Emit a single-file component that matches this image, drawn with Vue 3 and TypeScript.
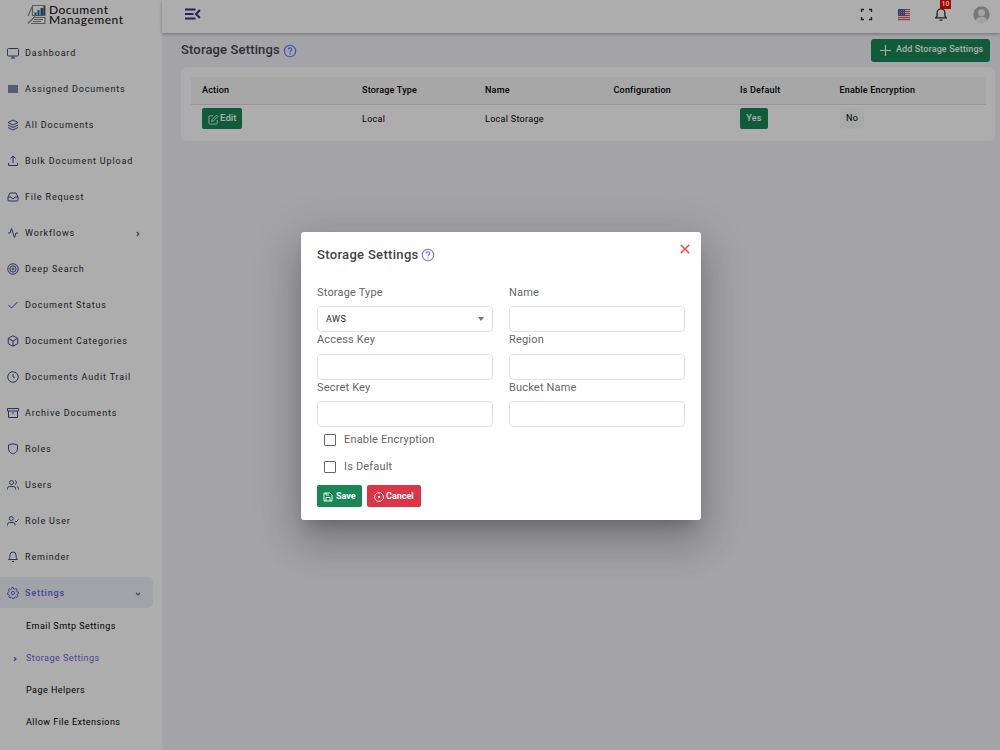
<script setup lang="ts">
interface NavItem { label: string; icon: string; arrow?: string; active?: boolean }

const nav: NavItem[] = [
  { label: 'Dashboard', icon: '<rect x="1" y="3" width="22" height="15" rx="2"/><path d="M8 22h8M12 18v4"/>' },
  { label: 'Assigned Documents', icon: '<rect class="solid" x="2" y="4" width="20" height="16"/>' },
  { label: 'All Documents', icon: '<path d="M12 2 2 7l10 5 10-5zM2 17l10 5 10-5M2 12l10 5 10-5"/>' },
  { label: 'Bulk Document Upload', icon: '<path d="M21 16v5H3v-5M17 7l-5-5-5 5M12 2v14"/>' },
  { label: 'File Request', icon: '<path d="M22 12h-6l-2 3h-4l-2-3H2M6 4 2 12v6q0 2 2 2h16q2 0 2-2v-6l-4-8z"/>' },
  { label: 'Workflows', icon: '<path d="M22 12h-4l-3 9L9 3l-3 9H2"/>', arrow: 'right' },
  { label: 'Deep Search', icon: '<circle cx="12" cy="12" r="10.5"/><circle cx="12" cy="12" r="6.3"/><circle cx="12" cy="12" r="2"/>' },
  { label: 'Document Status', icon: '<path d="M21 6 9 18l-6-6"/>' },
  { label: 'Document Categories', icon: '<path d="m12 1.500 9.500 5.200v10.600L12 22.500l-9.500-5.200V6.700zM3 7l9 5 9-5M12 12v10"/>' },
  { label: 'Documents Audit Trail', icon: '<circle cx="12" cy="12" r="10.500"/><path d="M12 6v6l4 2"/>' },
  { label: 'Archive Documents', icon: '<path d="M21 8v13H3V8M1 3h22v5H1zM10 12h4"/>' },
  { label: 'Roles', icon: '<path d="M12 22s9-3 9-10V4l-9-2.500L3 4v8c0 7 9 10 9 10z"/>' },
  { label: 'Users', icon: '<path d="M17 21v-2a4 4 0 0 0-4-4H5a4 4 0 0 0-4 4v2M23 21v-2a4 4 0 0 0-3-3.870M16 3.130a4 4 0 0 1 0 7.750"/><circle cx="9" cy="7" r="4"/>' },
  { label: 'Role User', icon: '<path d="M16 21v-2a4 4 0 0 0-4-4H5a4 4 0 0 0-4 4v2M16 12l2 2 5-5"/><circle cx="8.500" cy="7" r="4"/>' },
  { label: 'Reminder', icon: '<path d="M18 8A6 6 0 0 0 6 8c0 7-3 9-3 9h18s-3-2-3-9M10 21h4"/>' },
  {
    label: 'Settings', arrow: 'down', active: true,
    icon: '<circle cx="12" cy="12" r="3.200"/><path d="m10 1-.8 3-2 .8L4.500 3.300 2.800 6l1.400 2.500-.8 2L1 11.500v3l3 .8.800 2-1.300 2.700 2.500 1.700 2.500-1.400 2 .8.700 2.400h3l.8-3 2-.8 2.700 1.300 1.700-2.500-1.400-2.500.8-2 2.200-.7v-3l-3-.8-.8-2 1.300-2.700L17 3.300l-2.500 1.200-1.500-.5-.5-3z"/>',
  },
]

const subNav = ['Email Smtp Settings', 'Storage Settings', 'Page Helpers', 'Allow File Extensions']
const columns = ['Action', 'Storage Type', 'Name', 'Configuration', 'Is Default', 'Enable Encryption']
const fields = ['Storage Type', 'Name', 'Access Key', 'Region', 'Secret Key', 'Bucket Name']
const checks = ['Enable Encryption', 'Is Default']
</script>

<template>
  <div class="app">
    <aside class="sidebar">
      <div class="logo">
        <svg width="20" height="22" viewBox="0 0 20 22" fill="none">
          <path d="M5.500 1.500H18v10H5.500z" stroke="#8a8a8a" stroke-width="1.200" />
          <path d="M7.500 8.500h2v3h-2zM10.500 6h2v5.500h-2zM13.500 4h3v7.500h-3z" fill="#1c6598" />
          <path d="M16.500 2H18v9h-1.500z" fill="#555" />
          <path d="M1 12 5 3M1 19.500l7-7M6 13.500h12v6H4M7 15.500h9M6 17.500h8" stroke="#858585" stroke-width="1.100" />
        </svg>
        <div class="brand"><span>Document</span><span>Management</span></div>
      </div>
      <nav>
        <a v-for="n in nav" :key="n.label" class="item" :class="{ active: n.active }">
          <svg class="ico" viewBox="0 0 24 24" v-html="n.icon" />
          <span>{{ n.label }}</span>
          <svg v-if="n.arrow" class="arrow" :class="n.arrow" viewBox="0 0 8 8"><path d="m2.800 2 2 2-2 2" /></svg>
        </a>
        <a v-for="s in subNav" :key="s" class="sub" :class="{ current: s === 'Storage Settings' }">
          <svg v-if="s === 'Storage Settings'" class="mark" viewBox="0 0 8 8"><path d="m3 2.200 2 1.800-2 1.800" /></svg>{{ s }}
        </a>
      </nav>
    </aside>

    <div class="main">
      <header class="topbar">
        <svg class="burger" width="17" height="12" viewBox="0 0 17 12"><path d="M0 1.500h10.500M0 6h8.500M0 10.500h10.500M15 2 11 6l4 4" /></svg>
        <div class="tools">
          <svg class="full" width="13" height="13" viewBox="0 0 13 13"><path d="M1.500 4V1.500H4M9 1.500h2.500V4M11.500 9v2.500H9M4 11.500H1.500V9" /></svg>
          <svg class="flag" width="12" height="12" viewBox="0 0 12 12">
            <path fill="#f4e8e8" d="M0 0h12v12H0z" />
            <path stroke="#d9505a" d="M0 .5h12M0 2.500h12M0 4.500h12M0 6.500h12M0 8.500h12M0 10.500h12" />
            <path fill="#4658a8" d="M0 0h7v6.500H0z" />
            <path stroke="#b9c1e0" stroke-dasharray="1 1" d="M1 1.500h5M1 3.500h5M1 5.200h5" stroke-width=".7" />
          </svg>
          <div class="bell">
            <svg width="12" height="14" viewBox="0 0 12 14"><path d="M.7 9.800h10.600L9.900 8V4.700a3.900 3.900 0 0 0-7.800 0V8zM4.500 12.200h3" /></svg>
            <b>10</b>
          </div>
          <svg class="avatar" width="17" height="17" viewBox="0 0 17 17">
            <circle cx="8.500" cy="8.500" r="8.200" fill="#b2b2b5" />
            <circle cx="8.500" cy="6.700" r="3.500" fill="#f1f1f1" />
            <path d="M2.800 14.500a5.800 4.500 0 0 1 11.400 0 8.300 8.300 0 0 1-11.400 0z" fill="#f1f1f1" />
          </svg>
        </div>
      </header>

      <section class="content">
        <div class="heading">
          <h1>Storage Settings
            <svg class="help" viewBox="0 0 14 14"><circle cx="7" cy="7" r="5.700" /><path d="M5.200 5.500C5.300 3.300 8.800 3.400 8.800 5.400 8.800 6.700 7 6.700 7 8.200M7 9.300v1.200" /></svg>
          </h1>
          <button class="add">
            <svg width="11" height="11" viewBox="0 0 11 11"><path d="M5.500 0v11M0 5.500h11" stroke="#fff" stroke-width="1.200" /></svg>
            <span>Add Storage Settings</span>
          </button>
        </div>
        <div class="card">
          <div class="row head"><span v-for="c in columns" :key="c">{{ c }}</span></div>
          <div class="row body">
            <span><button class="edit">
              <svg width="11" height="11" viewBox="0 0 24 24"><path d="M11 4H4q-2 0-2 2v14q0 2 2 2h14q2 0 2-2v-7M18.500 2.500l3 3L12 15l-4 1 1-4z" /></svg><em>Edit</em></button></span>
            <span>Local</span><span>Local Storage</span><span></span>
            <span><b class="yes">Yes</b></span><span><b class="no">No</b></span>
          </div>
        </div>
      </section>
    </div>

    <div class="backdrop">
      <div class="dialog">
        <svg class="close" width="10" height="10" viewBox="0 0 10 10"><path d="m.7.7 8.600 8.600M9.300.7.7 9.300" /></svg>
        <h2>Storage Settings
          <svg class="help" viewBox="0 0 14 14"><circle cx="7" cy="7" r="5.700" /><path d="M5.200 5.500C5.300 3.300 8.800 3.400 8.800 5.400 8.800 6.700 7 6.700 7 8.200M7 9.300v1.200" /></svg>
        </h2>
        <div class="grid">
          <div v-for="(f, i) in fields" :key="f" class="field">
            <label>{{ f }}</label>
            <div class="box"><template v-if="i === 0"><span>AWS</span><i class="caret"></i></template></div>
          </div>
        </div>
        <div v-for="c in checks" :key="c" class="check"><i></i>{{ c }}</div>
        <div class="actions">
          <button class="save">
            <svg width="10" height="10" viewBox="0 0 10 10"><path d="M1 1h6l2 2v6H1zM3 9V5.500h4V9M3 1v2h3" /></svg>Save</button>
          <button class="cancel">
            <svg width="10" height="10" viewBox="0 0 10 10"><circle cx="5" cy="5" r="4.400" /><path d="m4 4 2 2M6 4 4 6" /></svg>Cancel</button>
        </div>
      </div>
    </div>
  </div>
</template>

<style>
body { margin: 0; overflow: hidden; }
</style>

<style scoped>
* { box-sizing: border-box; }
.app { position: relative; display: flex; width: 1000px; height: 750px; overflow: hidden; background: #f0f0f8; font-family: Roboto, "Liberation Sans", sans-serif; color: #212529; }
svg { fill: none; flex: none; }
button { border: 0; font-family: inherit; color: #fff; display: flex; align-items: center; padding: 0; }
.sidebar { width: 162px; background: #fff; }
.logo { height: 35px; padding: 4px 0 0 27px; display: flex; gap: 2px; }
.brand { display: flex; flex-direction: column; padding-top: 1px; font: 500 12px/10px Lato, sans-serif; letter-spacing: .5px; color: #222; }
.brand span { height: 10px; }
.item { display: flex; align-items: center; height: 30px; margin: 0 9px 6px 0; padding-left: 7px; border-radius: 0 5px 5px 0; font-size: 9px; letter-spacing: .84px; color: #2a2a2e; }
nav { padding-top: 3px; }
.item span { margin-left: 6px; }
.ico { width: 12px; height: 12px; stroke: #414c87; stroke-width: 2; }
.ico :deep(.solid) { fill: #8086aa; stroke: none; }
.item.active { height: 31px; margin: -1px 9px 2px 0; background: #eff1f9; color: #5d68e0; font-weight: 500; }
.active .ico { stroke: #5d68e0; }
.arrow { width: 8px; height: 8px; margin-left: auto; margin-right: 11px; margin-top: 2px; stroke: #666; stroke-width: 1.2; }
.arrow.down { transform: rotate(90deg); }
.sub { position: relative; display: block; height: 32px; padding-left: 26px; font-size: 9px; line-height: 32px; letter-spacing: .47px; color: #000; }
.sub.current { color: #5d68e0; }
.mark { position: absolute; left: 11px; top: 13px; width: 8px; height: 8px; stroke: #5d68e0; stroke-width: 1.3; }
.main { flex: 1; }
.topbar { height: 33px; padding: 0 10px 0 23px; display: flex; justify-content: space-between; background: #fff; box-shadow: 0 1px 3px rgba(0, 0, 0, .3); }
.burger { margin-top: 8px; stroke: #3c2f8f; stroke-width: 2; }
.tools { display: flex; }
.full { margin-top: 8px; stroke: #333; stroke-width: 1.4; }
.flag { margin: 9px 25px 0 25px; }
.bell { position: relative; width: 12px; margin-top: 7px; margin-right: 26px; stroke: #333; stroke-width: 1.3; }
.bell b { position: absolute; left: 5px; top: -8px; width: 11px; height: 10px; background: #f00; color: #fff; font-size: 7px; line-height: 11px; text-align: center; }
.avatar { margin-top: 6px; }
.content { padding: 0 5px 0 19px; }
.heading { height: 34px; display: flex; justify-content: space-between; padding: 6px 5px 0 0; }
h1, h2 { margin: 0; display: flex; font-size: 13px; font-weight: 500; line-height: 20px; letter-spacing: .32px; color: #444; }
h1 { padding-top: 1px; letter-spacing: .15px; }
.help { width: 14px; height: 14px; margin: 4px 0 0 3px; stroke: #6571ff; stroke-width: 1.1; }
.add { width: 119px; height: 23px; padding: 0 0 2px 9px; gap: 5px; border-radius: 3px; background: #198754; font-size: 9px; font-weight: 500; letter-spacing: .11px; white-space: nowrap; }
.add svg { margin-top: 2px; }
.add span { padding-bottom: 1px; }
.card { height: 74px; padding: 10px 9px 0 10px; background: #fff; border-radius: 6px; }
.row { display: grid; grid-template-columns: 160px 123px 128.500px 126.500px 99.500px 1fr; padding-left: 11px; align-items: center; font-size: 9px; letter-spacing: .2px; }
.head { height: 28px; padding-bottom: 2px; background: #f6f6f7; border-bottom: 1px solid #dedee2; font-weight: 500; color: #000; }
.body { height: 27px; color: #000; letter-spacing: .3px; }
.edit { width: 40px; height: 21px; padding-left: 6px; gap: 1px; border-radius: 2px; background: #198754; font-size: 9.500px; font-weight: 500; letter-spacing: .1px; }
.edit em { font-style: normal; padding-bottom: 2px; }
.edit svg { stroke: #fff; stroke-width: 1.800; margin-top: 1px; }
.yes, .no { display: block; width: 28px; height: 21px; border-radius: 2px; text-align: center; line-height: 21px; font-weight: 500; }
.yes { background: #198754; color: #fff; }
.no { width: 24px; padding-left: 1px; background: #f8f9fa; font-weight: 400; }
.backdrop { position: absolute; inset: 0; background: rgba(0, 0, 0, .32); }
.dialog { position: absolute; left: 301px; top: 232px; width: 400px; height: 288px; padding: 13px 16px 0; background: #fff; border-radius: 3px; box-shadow: 0 11px 15px -7px rgba(0, 0, 0, .2), 0 24px 38px 3px rgba(0, 0, 0, .14), 0 9px 46px 8px rgba(0, 0, 0, .12); }
.close { position: absolute; right: 11px; top: 12px; stroke: #f44336; stroke-width: 1.4; }
h2 .help { margin: 3px 0 0 2px; }
.grid { display: grid; grid-template-columns: 176px 176px; column-gap: 16px; margin-top: 19px; }
.field { height: 47.500px; }
label { display: block; height: 22px; padding-top: .5px; line-height: 16px; font-size: 11px; letter-spacing: .18px; color: #666; }
.box { height: 26px; display: flex; align-items: center; justify-content: space-between; padding: 0 8px; border: 1px solid #dee2e6; border-radius: 4px; font-size: 9px; letter-spacing: .5px; color: #222; }
.box span { padding-bottom: 1px; }
.caret { border: 3.500px solid transparent; border-top: 4px solid #757575; border-bottom: 0; margin-right: 0; }
.check { display: flex; align-items: center; height: 27px; padding-left: 7px; font-size: 11px; letter-spacing: .17px; color: #666; }
.grid + .check { margin-top: -1px; }
.check i { width: 12px; height: 12px; margin: 1px 8px 0 0; border: 1px solid #666; border-radius: 1px; }
.actions { display: flex; gap: 5px; margin-top: 5px; }
.actions button { height: 22px; border-radius: 2px; font-size: 9px; font-weight: 700; gap: 3px; padding-left: 6px; }
.actions svg { stroke: #fff; stroke-width: .9; margin-top: 2px; }
.save { width: 45px; background: #198754; }
.actions .cancel { width: 54px; padding-left: 7px; gap: 2px; background: #dc3545; }
</style>
